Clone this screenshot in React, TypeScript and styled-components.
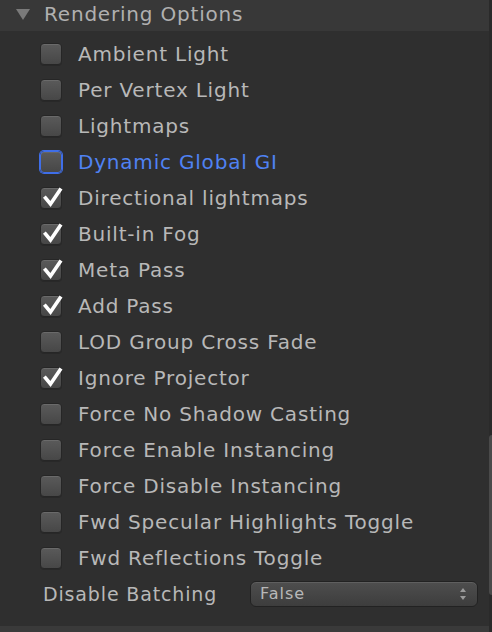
import React from "react";
import styled, { createGlobalStyle } from "styled-components";

const Global = createGlobalStyle`
  html, body { margin: 0; padding: 0; background: #2f2f2f; }
  body { width: 492px; height: 632px; overflow: hidden; }
`;

const Panel = styled.div`
  position: relative;
  width: 492px;
  height: 632px;
  background: #2f2f2f;
  font-family: "DejaVu Sans", "Liberation Sans", sans-serif;
  color: #b8b8b8;
  display: flex;
  flex-direction: column;
  box-sizing: border-box;
`;

const Header = styled.div`
  height: 31px;
  background: #383838;
  display: flex;
  align-items: center;
  padding-left: 16px;
  padding-bottom: 3px;
  box-sizing: border-box;
  gap: 14px;
  font-size: 20px;
  letter-spacing: 0.8px;
  color: #b0b0b0;
`;

const Triangle = styled.div`
  width: 0;
  height: 0;
  border-left: 7px solid transparent;
  border-right: 7px solid transparent;
  border-top: 11px solid #7a7a7a;
`;

const Body = styled.div`
  display: flex;
  flex-direction: column;
  padding-top: 5px;
  flex: 1;
`;

const Row = styled.label<{ $active?: boolean }>`
  height: 36px;
  display: flex;
  align-items: center;
  padding-left: 40px;
  gap: 16px;
  font-size: 20px;
  letter-spacing: 0.8px;
  color: ${(p) => (p.$active ? "#4f82f3" : "#b8b8b8")};
`;

const Box = styled.span<{ $active?: boolean }>`
  position: relative;
  width: 22px;
  height: 22px;
  box-sizing: border-box;
  border-radius: 4px;
  background: linear-gradient(#5a5a5a, #474747);
  border: 1px solid ${(p) => (p.$active ? "#3f6ee8" : "#262626")};
  box-shadow: ${(p) =>
    p.$active
      ? "0 0 0 1px #3f6ee8, inset 0 1px 0 #666"
      : "inset 0 1px 0 #6a6a6a, 0 1px 0 #282828"};
  flex-shrink: 0;
`;

const CheckMark = styled.svg`
  position: absolute;
  left: 1px;
  top: -3px;
`;

const SelectRow = styled.div`
  height: 35px;
  display: flex;
  align-items: center;
  padding-left: 43px;
  font-size: 19px;
  letter-spacing: 0.85px;
  color: #b8b8b8;
`;

const SelectLabel = styled.span`
  width: 207px;
`;

const Select = styled.div`
  width: 228px;
  height: 26px;
  box-sizing: border-box;
  border-radius: 6px;
  border: 1px solid #222;
  background: linear-gradient(#4e4e4e, #3d3d3d);
  box-shadow: inset 0 1px 0 #5f5f5f;
  display: flex;
  align-items: center;
  justify-content: space-between;
  padding: 0 10px 0 9px;
  font-size: 16px;
  letter-spacing: 1px;
  color: #b8b8b8;
`;

const Footer = styled.div`
  margin-top: auto;
  height: 6px;
  background: #3a3a3a;
`;

const ScrollTrack = styled.div`
  position: absolute;
  right: 0;
  top: 0;
  width: 3px;
  height: 100%;
  background: #2a2a2a;
`;

const ScrollThumb = styled.div`
  position: absolute;
  right: 0;
  top: 435px;
  width: 3px;
  height: 160px;
  border-radius: 3px 0 0 3px;
  background: #4a4a4a;
`;

const Check = () => (
  <CheckMark width="22" height="24" viewBox="0 0 22 24">
    <path
      d="M3.5 13 L8.5 19 L18 5"
      fill="none"
      stroke="#ffffff"
      strokeWidth="3.6"
      strokeLinecap="square"
      strokeLinejoin="miter"
    />
  </CheckMark>
);

const Arrows = () => (
  <svg width="8" height="14" viewBox="0 0 8 14">
    <path d="M4 1 L7 5 L1 5 Z" fill="#9a9a9a" />
    <path d="M4 13 L7 9 L1 9 Z" fill="#9a9a9a" />
  </svg>
);

const items: { label: string; checked?: boolean; active?: boolean }[] = [
  { label: "Ambient Light" },
  { label: "Per Vertex Light" },
  { label: "Lightmaps" },
  { label: "Dynamic Global GI", active: true },
  { label: "Directional lightmaps", checked: true },
  { label: "Built-in Fog", checked: true },
  { label: "Meta Pass", checked: true },
  { label: "Add Pass", checked: true },
  { label: "LOD Group Cross Fade" },
  { label: "Ignore Projector", checked: true },
  { label: "Force No Shadow Casting" },
  { label: "Force Enable Instancing" },
  { label: "Force Disable Instancing" },
  { label: "Fwd Specular Highlights Toggle" },
  { label: "Fwd Reflections Toggle" },
];

export default function App() {
  return (
    <>
      <Global />
      <Panel>
        <Header>
          <Triangle />
          <span>Rendering Options</span>
        </Header>
        <Body>
          {items.map((it) => (
            <Row key={it.label} $active={it.active}>
              <Box $active={it.active}>{it.checked && <Check />}</Box>
              <span>{it.label}</span>
            </Row>
          ))}
          <SelectRow>
            <SelectLabel>Disable Batching</SelectLabel>
            <Select>
              <span>False</span>
              <Arrows />
            </Select>
          </SelectRow>
        </Body>
        <Footer />
        <ScrollTrack />
        <ScrollThumb />
      </Panel>
    </>
  );
}
